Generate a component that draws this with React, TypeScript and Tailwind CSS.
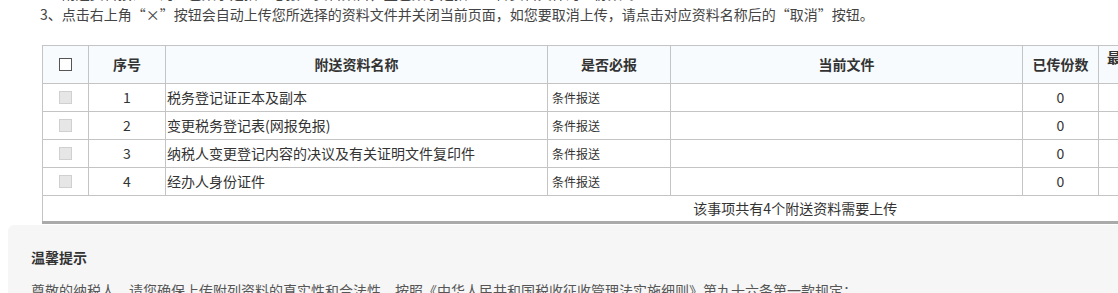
import React from "react";

const rows = [
  { no: 1, name: "税务登记证正本及副本" },
  { no: 2, name: "变更税务登记表(网报免报)" },
  { no: 3, name: "纳税人变更登记内容的决议及有关证明文件复印件" },
  { no: 4, name: "经办人身份证件" },
];

export default function App() {
  return (
    <div className="w-[1118px] h-[293px] overflow-hidden bg-white text-[#333] font-['Microsoft_YaHei','Noto_Sans_CJK_SC',sans-serif]">
      {/* tips */}
      <div className="pl-[40px] text-[14px] leading-[20px] text-[#444]">
        <p className="-mt-[17px] mb-[1px] whitespace-nowrap">
          2、附送资料按钮上的红色数字是指“必报”资料数目，蓝色数字是指已上传资料文件的“份数”。
        </p>
        <p className="whitespace-nowrap">
          3、点击右上角“×”按钮会自动上传您所选择的资料文件并关闭当前页面，如您要取消上传，请点击对应资料名称后的“取消”按钮。
        </p>
      </div>

      {/* attachments table */}
      <table className="mt-[21px] ml-[42px] w-[1506px] table-fixed border-collapse text-[14px] border-b-[3px] border-b-[#aaa]">
        <colgroup>
          <col className="w-[46px]" />
          <col className="w-[77px]" />
          <col className="w-[382px]" />
          <col className="w-[123px]" />
          <col className="w-[352px]" />
          <col className="w-[76px]" />
          <col className="w-[120px]" />
          <col />
        </colgroup>
        <thead>
          <tr className="h-[38px] bg-[#f7fbfd] font-bold">
            <th className="border border-[#c4c4c4]">
              <span className="mx-auto block w-[13px] h-[13px] border border-[#555] bg-white" />
            </th>
            <th className="border border-[#c4c4c4]">序号</th>
            <th className="border border-[#c4c4c4]">附送资料名称</th>
            <th className="border border-[#c4c4c4]">是否必报</th>
            <th className="border border-[#c4c4c4]">当前文件</th>
            <th className="border border-[#c4c4c4]">已传份数</th>
            <th className="border border-[#c4c4c4] align-top text-left pl-[8px] pt-[1px] whitespace-nowrap">最大份数</th>
            <th className="border border-[#c4c4c4]">操作</th>
          </tr>
        </thead>
        <tbody>
          {rows.map((r) => (
            <tr key={r.no} className="h-[28px]">
              <td className="border border-[#c4c4c4]">
                <span className="mx-auto block w-[13px] h-[13px] border border-[#d0d0d0] bg-[#e6e6e6]" />
              </td>
              <td className="border border-[#c4c4c4] text-center">{r.no}</td>
              <td className="border border-[#c4c4c4] pl-[1px]">{r.name}</td>
              <td className="border border-[#c4c4c4] pl-[4px] text-[12px]">条件报送</td>
              <td className="border border-[#c4c4c4]"></td>
              <td className="border border-[#c4c4c4] text-center">0</td>
              <td className="border border-[#c4c4c4]"></td>
              <td className="border border-[#c4c4c4]"></td>
            </tr>
          ))}
          <tr className="h-[27px]">
            <td colSpan={8} className="border-l border-[#c4c4c4] text-center">
              该事项共有4个附送资料需要上传
            </td>
          </tr>
        </tbody>
      </table>

      {/* warm reminder */}
      <div className="ml-[8px] mt-[1px] w-[1300px] rounded-md bg-[#f6f6f6] pl-[23px] pt-[20px] text-[14px]">
        <h3 className="font-bold leading-[24px] text-[#333]">温馨提示</h3>
        <p className="mt-[11px] leading-[20px] text-[#555] whitespace-nowrap">
          尊敬的纳税人，请您确保上传附列资料的真实性和合法性。按照《中华人民共和国税收征收管理法实施细则》第九十六条第一款规定：
        </p>
      </div>
    </div>
  );
}
